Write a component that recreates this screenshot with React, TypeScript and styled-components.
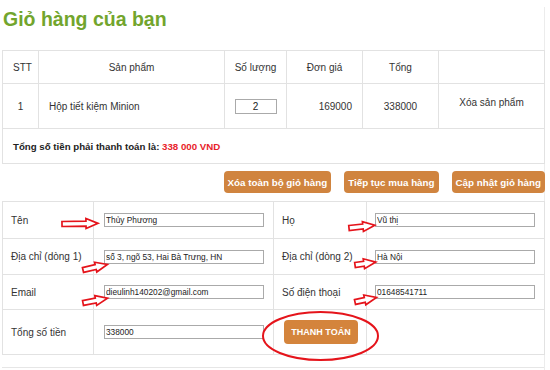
import React from "react";
import styled, { createGlobalStyle } from "styled-components";

const GlobalStyle = createGlobalStyle`
  html, body { margin: 0; padding: 0; background: #fff; }
  body { font-family: "Liberation Sans", Arial, sans-serif; color: #333; }
  * { box-sizing: border-box; }
`;

const Page = styled.div`
  position: relative;
  width: 545px;
  min-height: 370px;
  padding-left: 2px;
  border-right: 1px solid #ececec;
`;

const Title = styled.h2`
  margin: 7px 0 19px 1px;
  font-size: 19.5px;
  line-height: 24px;
  font-weight: bold;
  color: #72a52d;
`;

const Table = styled.table`
  width: 542px;
  border-collapse: collapse;
  table-layout: fixed;
  font-size: 10px;
  color: #333;
`;

const Cell = styled.td<{ $align?: string; $h: number; $pad?: string }>`
  border: 1px solid #e2e2e2;
  height: ${(p) => p.$h}px;
  padding: ${(p) => p.$pad ?? "0 10px"};
  text-align: ${(p) => p.$align ?? "center"};
  vertical-align: middle;
`;

const HeadCell = styled(Cell).attrs({ as: "th" })`
  font-weight: normal;
`;

const QtyInput = styled.input`
  width: 42px;
  height: 15px;
  border: 1px solid #aaa;
  font: 10px "Liberation Sans", Arial, sans-serif;
  text-align: center;
  padding: 0;
  color: #222;
`;

const RemoveText = styled.span`
  position: relative;
  top: -4px;
`;

const TotalText = styled.span`
  font-weight: bold;
  font-size: 9.7px;
  color: #222;
`;

const Red = styled.span`
  color: #e8232a;
`;

const ButtonRow = styled.div`
  display: flex;
  justify-content: flex-end;
  gap: 13px;
  margin: 7px -1px 8px 0;
`;

const Btn = styled.button`
  height: 22px;
  padding: 0 4px;
  border: none;
  border-radius: 4px;
  background: #d0843f;
  color: #fff;
  font: bold 9.8px "Liberation Sans", Arial, sans-serif;
  cursor: pointer;
`;

const PayBtn = styled(Btn)`
  height: 24px;
  width: 74px;
  padding: 0;
  font-size: 9px;
  background: #d4843c;
`;

const FormWrap = styled.div`
  position: relative;
`;

const FieldInput = styled.input`
  width: 160px;
  height: 14px;
  border: 1px solid #aaa;
  padding: 0 1px;
  font: 8.3px "Liberation Sans", Arial, sans-serif;
  color: #222;
  display: block;
`;

const FootLine = styled.div`
  margin-top: 12px;
  border-top: 1px solid #e6e6e6;
`;

const Overlay = styled.svg`
  position: absolute;
  left: 0;
  top: 0;
  width: 550px;
  height: 370px;
  pointer-events: none;
  overflow: visible;
`;

type ArrowProps = { x: number; y: number; len: number; rot: number };

const Arrow = ({ x, y, len, rot }: ArrowProps) => {
  const head = 12;
  const s = len - head;
  return (
    <g transform={`translate(${x} ${y}) rotate(${rot})`}>
      <polygon
        points={`0,-2.5 ${s},-2.5 ${s},-5 ${len},0 ${s},5 ${s},2.5 0,2.5`}
        fill="#fff"
        stroke="#e5141b"
        strokeWidth={1.7}
        strokeLinejoin="miter"
      />
    </g>
  );
};

const arrows: ArrowProps[] = [
  { x: 62, y: 217, len: 36, rot: -1 },
  { x: 83, y: 263, len: 25, rot: -13 },
  { x: 83, y: 296, len: 25, rot: -11 },
  { x: 349, y: 221, len: 26, rot: -6 },
  { x: 355, y: 258, len: 21, rot: -8 },
  { x: 355, y: 295, len: 22, rot: -12 },
];

export default function App() {
  return (
    <>
      <GlobalStyle />
      <Page>
        <Title>Giỏ hàng của bạn</Title>
        <Table>
          <colgroup>
            <col style={{ width: 36 }} />
            <col style={{ width: 186 }} />
            <col style={{ width: 62 }} />
            <col style={{ width: 76 }} />
            <col style={{ width: 76 }} />
            <col style={{ width: 106 }} />
          </colgroup>
          <tbody>
            <tr>
              <HeadCell $h={33}>STT</HeadCell>
              <HeadCell $h={33}>Sản phẩm</HeadCell>
              <HeadCell $h={33} $pad="0">Số lượng</HeadCell>
              <HeadCell $h={33}>Đơn giá</HeadCell>
              <HeadCell $h={33}>Tổng</HeadCell>
              <HeadCell $h={33}></HeadCell>
            </tr>
            <tr>
              <Cell $h={45}>1</Cell>
              <Cell $h={45} $align="left">Hộp tiết kiệm Minion</Cell>
              <Cell $h={45} $pad="0">
                <QtyInput defaultValue="2" />
              </Cell>
              <Cell $h={45} $align="right">169000</Cell>
              <Cell $h={45}>338000</Cell>
              <Cell $h={45} $pad="0">
                <RemoveText>Xóa sản phẩm</RemoveText>
              </Cell>
            </tr>
            <tr>
              <Cell $h={35} $align="left" colSpan={6}>
                <TotalText>
                  Tổng số tiền phải thanh toán là: <Red>338 000 VND</Red>
                </TotalText>
              </Cell>
            </tr>
          </tbody>
        </Table>
        <ButtonRow>
          <Btn>Xóa toàn bộ giỏ hàng</Btn>
          <Btn>Tiếp tục mua hàng</Btn>
          <Btn>Cập nhật giỏ hàng</Btn>
        </ButtonRow>
        <FormWrap>
          <Table>
            <colgroup>
              <col style={{ width: 91 }} />
              <col style={{ width: 180 }} />
              <col style={{ width: 93 }} />
              <col style={{ width: 178 }} />
            </colgroup>
            <tbody>
              <tr>
                <Cell $h={37} $align="left" $pad="0 8px">Tên</Cell>
                <Cell $h={37} $align="left">
                  <FieldInput defaultValue="Thủy Phương" />
                </Cell>
                <Cell $h={37} $align="left" $pad="0 8px">Họ</Cell>
                <Cell $h={37} $align="left" $pad="0 8px">
                  <FieldInput defaultValue="Vũ thị" />
                </Cell>
              </tr>
              <tr>
                <Cell $h={36} $align="left" $pad="0 8px">Địa chỉ (dòng 1)</Cell>
                <Cell $h={36} $align="left">
                  <FieldInput defaultValue="số 3, ngõ 53, Hai Bà Trưng, HN" />
                </Cell>
                <Cell $h={36} $align="left" $pad="0 8px">Địa chỉ (dòng 2)</Cell>
                <Cell $h={36} $align="left" $pad="0 8px">
                  <FieldInput defaultValue="Hà Nội" />
                </Cell>
              </tr>
              <tr>
                <Cell $h={35} $align="left" $pad="0 8px">Email</Cell>
                <Cell $h={35} $align="left">
                  <FieldInput defaultValue="dieulinh140202@gmail.com" />
                </Cell>
                <Cell $h={35} $align="left" $pad="0 8px">Số điện thoại</Cell>
                <Cell $h={35} $align="left" $pad="0 8px">
                  <FieldInput defaultValue="01648541711" />
                </Cell>
              </tr>
              <tr>
                <Cell $h={45} $align="left" $pad="0 8px">Tổng số tiền</Cell>
                <Cell $h={45} $align="left">
                  <FieldInput defaultValue="338000" />
                </Cell>
                <Cell $h={45} $align="left">
                  <PayBtn>THANH TOÁN</PayBtn>
                </Cell>
                <Cell $h={45}></Cell>
              </tr>
            </tbody>
          </Table>
        </FormWrap>
        <FootLine />
        <Overlay viewBox="0 0 550 370">
          {arrows.map((a, i) => (
            <Arrow key={i} {...a} />
          ))}
          <ellipse
            cx={320.5}
            cy={329}
            rx={57.5}
            ry={24}
            fill="none"
            stroke="#e5141b"
            strokeWidth={2}
          />
        </Overlay>
      </Page>
    </>
  );
}
